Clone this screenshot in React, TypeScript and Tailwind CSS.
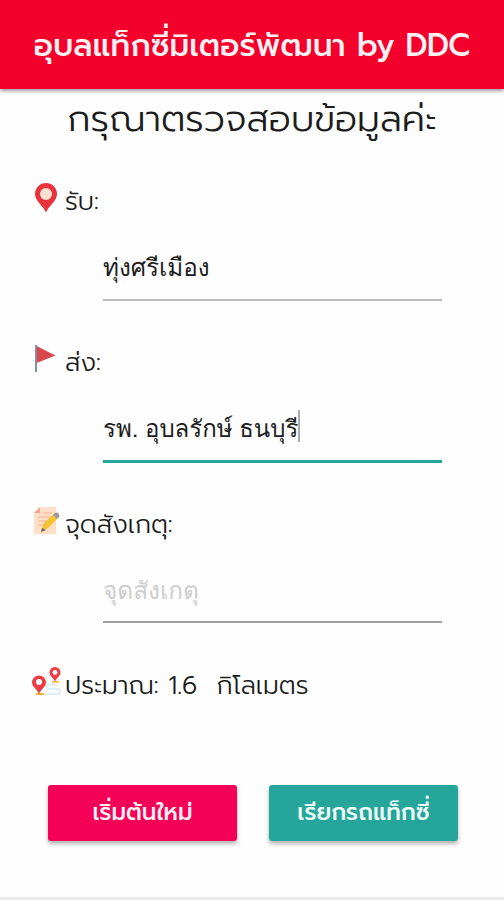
import type { ReactNode } from "react";

function PinIcon() {
  return (
    <svg width="24" height="30" viewBox="0 0 24 30">
      <path d="M12 29.500C9.500 23 1 18 1 11a11 11 0 0 1 22 0c0 7-8.500 12-11 18.500Z" fill="#e8323c" />
      <circle cx="12" cy="11" r="6" fill="#fde0d2" />
    </svg>
  );
}

function FlagIcon() {
  return (
    <svg width="24" height="30" viewBox="0 0 24 30">
      <path d="M2.500 2 21.500 11.500 2.500 19Z" fill="#d9484c" />
      <path d="M2 1v27" stroke="#76839c" strokeWidth="1.800" />
    </svg>
  );
}

function NoteIcon() {
  return (
    <svg width="26" height="30" viewBox="0 0 26 30">
      <path d="M6 1h16v27H0V7Z" fill="#ffe0c6" />
      <path d="M0 7 6 1v6Z" fill="#f8a18b" />
      <path d="M9 7h9M4 11h14M4 15h9M4 19h6" stroke="#f9bfa8" strokeWidth="1.400" />
      <path d="m8 22 2-5L20 8l4 4-10 10-6 3Z" fill="#f4c430" />
      <path d="m8 22-1 4 5-2Z" fill="#6b5b56" />
      <path d="m19 9 2-2q2-1 3.500.5T25 11l-2 2Z" fill="#9a9aa6" />
    </svg>
  );
}

function RouteIcon() {
  return (
    <svg width="30" height="30" viewBox="0 0 30 30">
      <path d="M9 27h16.500q2.500 0 2.500-2.500T25.500 22H18q-3 0-3-2t3-2.500h5" fill="none" stroke="#d3ebf8" strokeWidth="1.600" />
      <path d="M4 26h8v2H4ZM20 14h7v1.500h-7Z" fill="#f9b233" />
      <path d="M7 27C5 22 0 20 0 15.500a7 7 0 0 1 14 0C14 20 9 22 7 27Z" fill="#ec3d45" />
      <circle cx="7" cy="15" r="3" fill="#fff" />
      <path d="M23 14.500C21.500 11 17.500 9 17.500 5.500a5.500 5.500 0 0 1 11 0c0 3.500-4 5.500-5.500 9Z" fill="#ec3d45" />
      <circle cx="23" cy="5.500" r="2.400" fill="#fff" />
    </svg>
  );
}

function Label({ icon, children }: { icon: ReactNode; children: ReactNode }) {
  return (
    <div className="flex h-[40px] items-center">
      <span className="flex w-[33px] shrink-0 -translate-y-[3px]">{icon}</span>
      <span className="pt-[2px] whitespace-pre text-[25.400px] leading-[40px] font-light">{children}</span>
    </div>
  );
}

export default function App() {
  return (
    <div className="flex h-[900px] w-[504px] flex-col overflow-hidden bg-[#fefefe] font-['Prompt','Noto_Sans_Thai','Noto_Sans',sans-serif] text-[#1c1c1c]">
      <header className="flex h-[89px] shrink-0 items-center justify-center bg-[#f4002c] pt-[2px] text-[31.200px] leading-[40px] font-medium whitespace-nowrap text-[#fff0f2] shadow-[0_2px_4px_rgba(0,0,0,0.4)]">
        อุบลแท็กซี่มิเตอร์พัฒนา by DDC
      </header>
      <main className="flex flex-col">
        <h1 className="mt-[5px] h-[50px] text-center text-[36.700px] leading-[50px] font-light whitespace-nowrap">
          กรุณาตรวจสอบข้อมูลค่ะ
        </h1>
        <div className="mt-[37px] flex flex-col pl-[32px]">
          <Label icon={<span className="pl-[2px]"><PinIcon /></span>}>รับ:</Label>
          <div className="mt-[21px] ml-[71px] flex h-[59px] w-[339px] border-b-2 border-[#bdbdbd] pt-[6px] font-['Loma','Noto_Sans',sans-serif] text-[24.200px] leading-[40px]">
            ทุ่งศรีเมือง
          </div>
          <div className="mt-[41px]">
            <Label icon={<span className="pl-[2px]"><FlagIcon /></span>}>ส่ง:</Label>
          </div>
          <div className="mt-[21px] ml-[71px] flex h-[60px] w-[339px] border-b-3 border-[#26a69a] pt-[6px] font-['Loma','Noto_Sans',sans-serif] text-[24px] leading-[40px]">
            <span className="[word-spacing:-1.5px]">รพ. อุบลรักษ์ ธนบุรี</span>
            <span className="mt-[1px] h-[32px] w-[2px] bg-[#aaa]" />
          </div>
          <div className="mt-[41px]">
            <Label icon={<span className="pl-[2px]"><NoteIcon /></span>}>จุดสังเกตุ:</Label>
          </div>
          <div className="mt-[20px] ml-[71px] flex h-[59px] w-[339px] border-b-2 border-[#9e9e9e] pt-[7px] font-['Loma','Noto_Sans',sans-serif] text-[24.400px] leading-[40px] text-[#cdcdcd]">
            จุดสังเกตุ
          </div>
          <div className="mt-[42px]">
            <Label icon={<RouteIcon />}>{"ประมาณ: 1.6  กิโลเมตร"}</Label>
          </div>
        </div>
        <div className="mt-[80px] flex gap-[32px] pl-[48px] text-[23px] font-medium text-[#f0fffc]">
          <button className="h-[56px] w-[189px] rounded-[3px] bg-[#f50057] leading-[50px] whitespace-nowrap text-[#fff0f5] shadow-[0_3px_4px_rgba(0,0,0,0.3)]">
            เริ่มต้นใหม่
          </button>
          <button className="h-[56px] w-[189px] rounded-[3px] bg-[#26a69a] leading-[50px] whitespace-nowrap shadow-[0_3px_4px_rgba(0,0,0,0.3)]">
            เรียกรถแท็กซี่
          </button>
        </div>
      </main>
      <footer className="mt-auto h-[3px] bg-[#e8e8e8]" />
    </div>
  );
}
